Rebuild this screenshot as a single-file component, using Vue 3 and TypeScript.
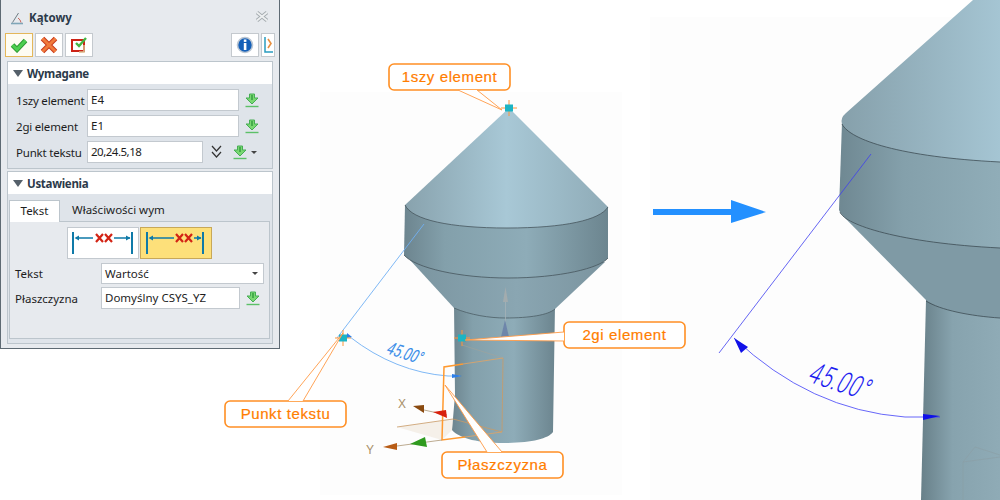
<script setup lang="ts">
interface Callout { label: string; x: number; y: number; w: number; tail: string }
const callouts: Callout[] = [
  { label: '1szy element', x: 389, y: 64, w: 121, tail: '458,90 502,110 477,90' },
  { label: '2gi element', x: 564, y: 322, w: 121, tail: '564,332 465,340 564,341' },
  { label: 'Punkt tekstu', x: 225, y: 401, w: 121, tail: '288,401 343,333 303,401' },
  { label: 'Płaszczyzna', x: 442, y: 452, w: 121, tail: '487,452 445,385 502,452' },
]
const markers = [
  { x: 509, y: 108 },
  { x: 343, y: 338 },
  { x: 462, y: 338 },
]
</script>

<template>
  <div class="stage">
    <svg class="canvas" width="1000" height="500" viewBox="0 0 1000 500">
      <defs>
        <linearGradient id="cone" x1="0" x2="1" y1="0" y2="0">
          <stop offset="0" stop-color="#88a2ad" />
          <stop offset="0.5" stop-color="#a8c8d6" />
          <stop offset="1" stop-color="#8fabb7" />
        </linearGradient>
        <linearGradient id="band" x1="0" x2="1" y1="0" y2="0">
          <stop offset="0" stop-color="#6d858f" />
          <stop offset="0.2" stop-color="#83a0ab" />
          <stop offset="0.6" stop-color="#8eacb8" />
          <stop offset="1" stop-color="#6c858f" />
        </linearGradient>
        <linearGradient id="under" x1="0" x2="1" y1="0" y2="0">
          <stop offset="0" stop-color="#7b95a0" />
          <stop offset="0.55" stop-color="#8aa6b2" />
          <stop offset="1" stop-color="#7b949f" />
        </linearGradient>
        <linearGradient id="bigCone" x1="0" x2="1" y1="0" y2="0">
          <stop offset="0" stop-color="#86a0ab" />
          <stop offset="1" stop-color="#a5c5d3" />
        </linearGradient>
        <linearGradient id="bigBand" x1="0" x2="1" y1="0" y2="0">
          <stop offset="0" stop-color="#6f8892" />
          <stop offset="0.4" stop-color="#84a0ab" />
          <stop offset="1" stop-color="#90adb8" />
        </linearGradient>
        <linearGradient id="bigStem" x1="0" x2="1" y1="0" y2="0">
          <stop offset="0" stop-color="#688089" />
          <stop offset="0.4" stop-color="#87a3ae" />
          <stop offset="1" stop-color="#8fabb6" />
        </linearGradient>
      </defs>

      <rect x="650" y="17" width="350" height="483" fill="#fdfdfd" />
      <rect x="320" y="92" width="302" height="403" fill="#fdfdfd" />

      <!-- small model -->
      <path d="M454 305 L455 395 L452 430 C460 439 480 443 503 443 C530 443 548 439 553 432 L555 305 Z" fill="url(#band)" />
      <path d="M410 260 L454 308 C470 315 490 318 505 318 C530 318 548 315 555 309 L605 262 Z" fill="url(#under)" />
      <path d="M405 205 L404 255 C415 268 460 278 508 278 C560 278 600 268 608 258 L608 207 Z" fill="url(#band)" />
      <path d="M404 255 C415 268 460 278 508 278 C560 278 600 268 608 258" fill="none" stroke="#46565d" stroke-width="0.8" />
      <path d="M454 308 C470 315 490 318 505 318 C530 318 548 315 555 309" fill="none" stroke="#4d5e66" stroke-width="0.8" />
      <path d="M509 108 L405 205 C412 220 450 228 507 228 C565 228 600 220 608 207 Z" fill="url(#cone)" />
      <path d="M405 205 C412 220 450 228 507 228 C565 228 600 220 608 207" fill="none" stroke="#46565d" stroke-width="0.8" />
      <path d="M505.5 302 V322" stroke="#a5b3b8" stroke-width="0.8" />
      <path d="M503 302 L505.5 287 L508 302 Z" fill="#a3acae" />
      <path d="M501 337 L505 320 L509 337 Z" fill="#6e86aa" />

      <!-- big model -->
      <path d="M926 300 L921 500 L1000 500 L1000 305 Z" fill="url(#bigStem)" />
      <path d="M840 213 L926 300 C940 310 970 316 1000 318 L1000 240 Z" fill="#7f9aa5" />
      <path d="M842 122 L839 210 C845 225 900 243 1000 248 L1000 160 Z" fill="url(#bigBand)" />
      <path d="M973 0 L846 113 Q840 118 842 124 C850 140 900 157 1000 162 L1000 0 Z" fill="url(#bigCone)" />
      <path d="M842 124 C850 140 900 157 1000 162 M840 212 C845 225 900 243 1000 248 M926 301 C940 310 970 316 1000 318" fill="none" stroke="#3e4d54" stroke-width="0.8" />
      <path d="M963 500 L963 462 L975 447 L1000 455 M963 462 L1000 457" fill="none" stroke="#8b9da5" stroke-width="0.6" />

      <!-- large dimension -->
      <path d="M871 154 L719 353" fill="none" stroke="#3f3ff0" stroke-width="0.8" />
      <path d="M734 338 Q810 410 905 417 L940 417" fill="none" stroke="#4040f8" stroke-width="0.8" />
      <path d="M734 338 L748 347 L741 353 Z" fill="#1010e8" />
      <path d="M923 414 L940 416 L923 420 Z" fill="#1010e8" />
      <text class="bigDim" transform="translate(806 381) rotate(18) skewX(-12) scale(0.68 1)">45.00°</text>

      <!-- small dimension -->
      <path d="M424 224 L337 338" fill="none" stroke="#70b0f4" stroke-width="0.9" />
      <path d="M350 337 Q395 372 448 376 L460 376" fill="none" stroke="#70b0f4" stroke-width="0.9" />
      <path d="M347 333 L352 337 L347 338 Z M452 374 L462 376 L452 378 Z" fill="#2d7fe8" />
      <text class="smallDim" transform="translate(385 353) rotate(18) skewX(-12) scale(0.7 1)">45.00°</text>

      <!-- datum plane -->
      <path d="M397 427 L453 419 L452 430 L442 440 Z" fill="#eee3d5" fill-opacity="0.5" />
      <path d="M397 427 L453 419 L502 432 M503 358 L502 432" fill="none" stroke="#c99b66" stroke-width="0.8" />
      <path d="M462 345 L503 358" fill="none" stroke="#a3a39a" stroke-width="0.6" />
      <path d="M463 364 L444 367 L442 440 L465 437" fill="none" stroke="#ff9a30" stroke-width="1.5" />
      <path d="M463 364 L503 358 M465 437 L502 432" fill="none" stroke="#d9a46b" stroke-width="0.9" />

      <!-- triad -->
      <path d="M424 410 L447 415 M397 446 L442 440" fill="none" stroke="#b5a184" stroke-width="0.9" />
      <path d="M413 406 L424 405 L424 413 Z" fill="#8a4a10" />
      <path d="M433 412 L446 410 L447 418 Z" fill="#d8200c" />
      <path d="M410 444 L425 437 L427 447 Z" fill="#2f9a1e" />
      <path d="M383 447 L397 443 L397 450 Z" fill="#b85c16" />
      <text class="axis" x="398" y="408">X</text>
      <text class="axis" x="366" y="454">Y</text>

      <!-- points -->
      <g v-for="m in markers" :key="m.x">
        <path :d="`M${m.x - 8} ${m.y} H${m.x + 8} M${m.x} ${m.y - 8} V${m.y + 8}`" stroke="#ff9638" stroke-width="1" />
        <rect :x="m.x - 4" :y="m.y - 3.5" width="8" height="7" fill="#1cb4c4" />
      </g>

      <!-- blue flow arrow -->
      <path d="M653 209 L731 209 L731 200 L766 212 L731 223 L731 215 L653 215 Z" fill="#2390ff" />

      <!-- callouts -->
      <g v-for="c in callouts" :key="c.label">
        <rect :x="c.x" :y="c.y" :width="c.w" height="26" rx="5" fill="#fff" stroke="#ff8f24" stroke-width="1.6" />
        <polygon :points="c.tail" fill="#fff" />
        <polyline :points="c.tail" fill="none" stroke="#ff9a45" stroke-width="0.9" />
        <text class="calloutText" :x="c.x + c.w / 2" :y="c.y + 18">{{ c.label }}</text>
      </g>
    </svg>

    <section class="panel">
      <header class="title">
        <svg width="14" height="14" viewBox="0 0 14 14">
          <path d="M1 12.5 H13" stroke="#7fa6b8" stroke-width="1.6" />
          <path d="M2.5 11.5 L8.5 2" stroke="#707d84" stroke-width="1" fill="none" />
          <path d="M8 7 Q10.5 8.5 11 11.5" stroke="#c8665c" stroke-width="1" fill="none" />
        </svg>
        <span class="titleText">Kątowy</span>
        <svg class="close" width="14" height="11" viewBox="0 0 14 11">
          <path d="M2 1.5 L12 9.5 M12 1.5 L2 9.5" stroke="#a4abaf" stroke-width="3.6" />
          <path d="M2 1.5 L12 9.5 M12 1.5 L2 9.5" stroke="#eef0f1" stroke-width="1.8" />
        </svg>
      </header>

      <div class="toolbar">
        <button class="tool active">
          <svg width="18" height="16" viewBox="0 0 18 16">
            <path d="M2.5 8 L7 12.5 L15.5 3.5" fill="none" stroke="#2f9a33" stroke-width="5" />
            <path d="M2.5 8 L7 12.5 L15.5 3.5" fill="none" stroke="#4ccf4f" stroke-width="3" />
          </svg>
        </button>
        <button class="tool">
          <svg width="18" height="18" viewBox="0 0 18 18">
            <path d="M2.5 2.5 L15.5 15.5 M15.5 2.5 L2.5 15.5" stroke="#c83a1c" stroke-width="5" />
            <path d="M2.5 2.5 L15.5 15.5 M15.5 2.5 L2.5 15.5" stroke="#f07a3c" stroke-width="3" />
          </svg>
        </button>
        <button class="tool">
          <svg width="18" height="16" viewBox="0 0 18 16">
            <path d="M2 3 H14 V14 H2 Z" fill="#fff" stroke="#cc2216" stroke-width="2" />
            <path d="M14 8 V15 H9" fill="none" stroke="#d9b98a" stroke-width="1.6" />
            <path d="M6 6 L9 9 L16 1" fill="none" stroke="#45b545" stroke-width="2.4" />
          </svg>
        </button>
        <span class="spacer"></span>
        <button class="tool">
          <svg width="18" height="18" viewBox="0 0 18 18">
            <circle cx="9" cy="9" r="7.5" fill="#1560b8" stroke="#bcc7d3" stroke-width="1.6" />
            <rect x="7.8" y="3.5" width="2.6" height="2.4" fill="#fff" />
            <rect x="7.8" y="7" width="2.6" height="7" fill="#fff" />
          </svg>
        </button>
        <button class="tool narrow">
          <svg width="9" height="18" viewBox="0 0 9 18">
            <path d="M1 1 V16 H9" fill="none" stroke="#2a9cc0" stroke-width="1.5" />
            <path d="M4 3 L7 7.5 L4 12" fill="none" stroke="#e89040" stroke-width="1.6" />
          </svg>
        </button>
      </div>

      <div class="section">
        <div class="sectionHead"><i class="tri"></i>Wymagane</div>
        <div class="sectionBody req">
          <label class="row">
            <span class="lab">1szy element</span>
            <span class="field wide">E4</span>
            <svg class="pick"><use href="#pick" /></svg>
          </label>
          <label class="row">
            <span class="lab">2gi element</span>
            <span class="field wide">E1</span>
            <svg class="pick"><use href="#pick" /></svg>
          </label>
          <label class="row">
            <span class="lab">Punkt tekstu</span>
            <span class="field short tight">20,24.5,18</span>
            <svg class="chev" width="11" height="14" viewBox="0 0 11 14">
              <path d="M1 1 L5.5 6 L10 1 M1 7 L5.5 12 L10 7" fill="none" stroke="#333" stroke-width="1.2" />
            </svg>
            <svg class="pick second"><use href="#pick" /></svg>
            <i class="caret"></i>
          </label>
        </div>
      </div>

      <div class="section">
        <div class="sectionHead"><i class="tri"></i>Ustawienia</div>
        <div class="sectionBody set">
          <div class="tabs">
            <span class="tab on">Tekst</span>
            <span class="tab">Właściwości wym</span>
          </div>
          <div class="tabPanel">
            <div class="modes">
              <button class="mode">
                <svg width="70" height="30" viewBox="0 0 70 30">
                  <path d="M5 4 V26 M64 4 V26" stroke="#0f7aa8" stroke-width="2" />
                  <path d="M8 10 H25 M46 10 H62" stroke="#0f7aa8" stroke-width="1.6" />
                  <path d="M6.5 10 L11 7.5 V12.5 Z M62.5 10 L58 7.5 V12.5 Z" fill="#0f7aa8" />
                  <path d="M28 6 L35 14 M35 6 L28 14 M37 6 L44 14 M44 6 L37 14" stroke="#d32415" stroke-width="2.2" />
                </svg>
              </button>
              <button class="mode picked">
                <svg width="70" height="30" viewBox="0 0 70 30">
                  <path d="M6 4 V26 M62 4 V26" stroke="#0f7aa8" stroke-width="2" />
                  <path d="M9 10 H33 M53 10 H60" stroke="#0f7aa8" stroke-width="1.6" />
                  <path d="M7.5 10 L12 7.5 V12.5 Z M60.5 10 L56 7.5 V12.5 Z" fill="#0f7aa8" />
                  <path d="M35 6 L42 14 M42 6 L35 14 M44 6 L51 14 M51 6 L44 14" stroke="#d32415" stroke-width="2.2" />
                </svg>
              </button>
            </div>
            <div class="row2">
              <span class="lab2">Tekst</span>
              <span class="field sel">Wartość<i class="caret"></i></span>
            </div>
            <div class="row2">
              <span class="lab2">Płaszczyzna</span>
              <span class="field plane">Domyślny CSYS_YZ</span>
              <svg class="pick"><use href="#pick" /></svg>
            </div>
          </div>
        </div>
      </div>

      <svg width="0" height="0" class="defs">
        <symbol id="pick" viewBox="0 0 14 15">
          <path d="M4.5 1 H9.5 V5 H13 L7 11 L1 5 H4.5 Z" fill="#7ad872" stroke="#46ad55" stroke-width="1" />
          <path d="M7 2 V7" stroke="#2f9a3c" stroke-width="1.4" />
          <path d="M0.5 13.5 H13.5" stroke="#5cc068" stroke-width="1.4" />
        </symbol>
      </svg>
    </section>
  </div>
</template>

<style>
html, body { margin: 0; background: #fff; overflow: hidden; }
</style>

<style scoped>
.stage { position: relative; width: 1000px; height: 500px; overflow: hidden; font-family: "Noto Sans", "Liberation Sans", sans-serif; }
.canvas { position: absolute; left: 0; top: 0; }
.bigDim { font: 300 30px Roboto, sans-serif; fill: #1c1cf0; letter-spacing: 1px; }
.smallDim { font: 400 18px Roboto, sans-serif; fill: #3d8fe8; }
.axis { font: 12px "Liberation Sans", sans-serif; fill: #a88f68; }
.calloutText { font: 15px "Liberation Sans", sans-serif; fill: #ff7d00; text-anchor: middle; letter-spacing: 0.6px; stroke: #ff7d00; stroke-width: 0.2px; }

.panel {
  position: relative; box-sizing: border-box; width: 280px; height: 349px;
  background: #e7eaee; border: 1px solid #5e6a73; border-top: 0;
  padding: 0 5px 0 6px; display: flex; flex-direction: column; color: #1d1d1d; font-size: 11.5px;
}
.title { height: 32px; display: flex; align-items: center; padding-left: 3px; gap: 5px; padding-top: 3px; box-sizing: border-box; }
.titleText { font-weight: 700; color: #2c3a4a; font-size: 11.5px; }
.close { margin-left: auto; margin-right: 5px; margin-top: -2px; }
.toolbar { height: 24px; display: flex; gap: 2px; margin: 1px -1px 0 -2px; }
.tool {
  width: 28px; height: 24px; padding: 0; box-sizing: border-box; background: #fff; border: 1px solid #c4c9ce;
  display: flex; align-items: center; justify-content: center;
}
.tool.active { border-color: #e4b75a; background: #fefcf2; }
.tool.narrow { width: 14px; }
.spacer { flex: 1; }
.section { border: 1px solid #bcc5cc; margin-top: 4px; width: 266px; box-sizing: border-box; }
.section + .section { margin-top: 2px; }
.sectionHead {
  height: 22px; background: #fff; display: flex; align-items: center; gap: 4px; padding-left: 5px;
  font-weight: 700; color: #2c3a4a; font-size: 11.5px; letter-spacing: -0.3px;
}
.tri { width: 0; height: 0; border-left: 5px solid transparent; border-right: 5px solid transparent; border-top: 7px solid #55606a; }
.sectionBody { background: #dfe4ea; }
.req { height: 84px; padding: 5px 0 0 8px; box-sizing: border-box; display: flex; flex-direction: column; gap: 4px; }
.set { height: 149px; padding: 5px 1px 0 1px; box-sizing: border-box; }
.row { display: flex; align-items: center; height: 22px; }
.lab { width: 71px; flex: none; letter-spacing: -0.2px; }
.field {
  box-sizing: border-box; height: 22px; line-height: 19px; background: #fff; border: 1px solid #c3c9cf;
  padding-left: 3px; white-space: nowrap; position: relative; font-size: 11.5px; display: block;
}
.wide { width: 152px; }
.short { width: 116px; }
.tight { letter-spacing: -0.5px; }
.pick { width: 14px; height: 15px; margin-left: 6px; flex: none; }
.pick.second { margin-left: 11px; }
.chev { margin-left: 8px; }
.caret { width: 0; height: 0; border-left: 3px solid transparent; border-right: 3px solid transparent; border-top: 3px solid #444; margin-left: 4px; display: inline-block; }
.tabs { display: flex; height: 22px; align-items: flex-end; }
.tab { padding: 0 12px; height: 21px; line-height: 20px; }
.tab.on { background: #fff; width: 51px; box-sizing: border-box; text-align: center; padding: 0; border: 1px solid #bcc5cc; border-bottom: 0; position: relative; top: 1px; height: 22px; }
.tabPanel { height: 118px; box-sizing: border-box; border: 1px solid #bcc5cc; background: #e7eaee; margin-right: 1px; padding-top: 5px; }
.modes { display: flex; gap: 1px; margin-left: 57px; height: 32px; }
.mode { width: 72px; height: 32px; padding: 0; box-sizing: border-box; background: #fff; border: 1px solid #c3c9cf; display: flex; align-items: center; justify-content: center; }
.mode.picked { background: #fde07a; border-color: #c8a858; }
.row2 { display: flex; align-items: center; margin-top: 3px; height: 22px; padding-left: 5px; }
.lab2 { width: 86px; flex: none; }
.sel { width: 163px; display: flex; align-items: center; justify-content: space-between; padding-right: 5px; height: 21px; }
.plane { width: 139px; }
.defs { position: absolute; }
</style>
